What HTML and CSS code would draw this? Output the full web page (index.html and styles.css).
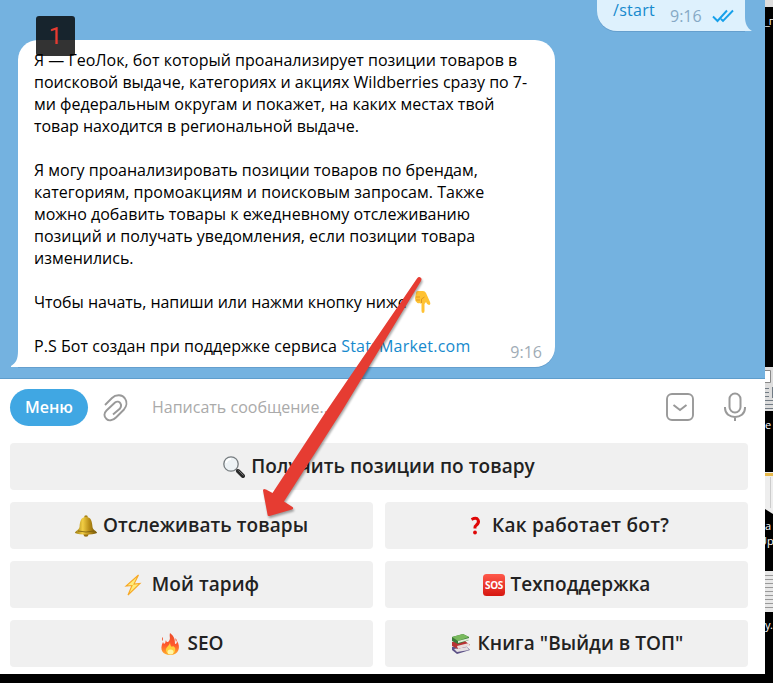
FILE: index.html
```html
<!DOCTYPE html>
<html lang="ru">
<head>
<meta charset="utf-8">
<title>ГеоЛок</title>
<link rel="stylesheet" href="styles.css">
</head>
<body>
<main class="app">
  <section class="chat">
    <div class="outgoing">
      <span class="command">/start</span>
      <time class="sent">9:16</time>
      <svg class="checks" width="22" height="14" viewBox="0 0 22 14"><path d="M1 7.500l4.500 4.500L15 1.500M9 10l2 2L21 1.500" fill="none" stroke="#16a0ea" stroke-width="1.900"/></svg>
      <svg class="tail-out" width="9" height="14" viewBox="0 0 9 14"><path d="M0 0H2C2 6 4 11 9 14H0z" fill="#def1fd"/></svg>
    </div>
    <article class="incoming">
      <p>Я — ГеоЛок, бот который проанализирует позиции товаров в<br>поисковой выдаче, категориях и акциях Wildberries сразу по 7-<br>ми федеральным округам и покажет, на каких местах твой<br><span class="narrow">товар находится в региональной выдаче.</span></p>
      <p>Я могу проанализировать позиции товаров по брендам,<br><span class="wider">категориям, промоакциям и поисковым запросам. Также</span><br>можно добавить товары к ежедневному отслеживанию<br>позиций и получать уведомления, если позиции товара<br>изменились.</p>
      <p><span class="narrow">Чтобы начать, напиши или нажми кнопку ниже</span> <svg class="finger" width="16" height="22" viewBox="0 0 16 22"><path d="M1 2Q1 0 3 0h5q2 0 3 2l4 9q1 2.500-1 3-2 0-3-3l-1.500 2v7q0 2-1.500 2T6.500 20v-8q-1 1-2 0-2 1-3-1Q0 10 0 7z" fill="#ffc233"/><path d="M1 6h4M1 9h4M6.500 12V8l3-2" fill="none" stroke="#dd9822" stroke-width="1"/></svg></p>
      <p><span class="wider">P.S Бот создан при поддержке сервиса</span> <a>StatsMarket.com</a></p>
      <time class="received">9:16</time>
      <svg class="tail-in" width="9" height="16" viewBox="0 0 9 16"><path d="M9 16H0V15C5 12 7 8 7 0H9z" fill="#fff"/></svg>
    </article>
    <div class="step">1</div>
  </section>
  <section class="composer">
    <span class="menu">Меню</span>
    <svg class="clip" width="26" height="28" viewBox="0 0 26 28"><path d="M2 11L9 4C13 0 19.500 .5 22 4.500 24.500 8 23.500 12.500 21 15.500L13 23.500C9.500 27 5.500 27 3.500 25 .5 22.500 1 19 3.500 16.500L12 8.500C14 7 16.500 7.500 17.500 9.500 18.500 11 18 13 17 14.500L10 20.500" fill="none" stroke="#999" stroke-width="1.900"/></svg>
    <span class="placeholder">Написать сообщение...</span>
    <svg class="keyboard-toggle" width="28" height="28" viewBox="0 0 28 28"><rect x="1" y="1" width="26" height="26" rx="5" fill="none" stroke="#999" stroke-width="1.900"/><path d="M7.500 12L14 17l6.500-5" fill="none" stroke="#999" stroke-width="2"/></svg>
    <svg class="mic" width="22" height="30" viewBox="0 0 22 30"><rect x="5.500" y="1.500" width="11" height="19" rx="5.500" fill="none" stroke="#999" stroke-width="2"/><path d="M1 15v1c0 12 20 12 20 0v-1M11 25v4" fill="none" stroke="#999" stroke-width="2"/></svg>
  </section>
  <section class="keys">
    <div class="key wide"><svg width="22" height="22" viewBox="0 0 22 22"><path d="M13 13l2.500 2.500" stroke="#777" stroke-width="2"/><path d="M15 15l5 5" stroke="#292929" stroke-width="4" stroke-linecap="round"/><path d="M15.500 14.500l5 5" stroke="#777" stroke-width="1"/><circle cx="8" cy="8" r="7.200" fill="#edf2f5" stroke="#777d80" stroke-width="1.300"/><path d="M3 7q1-4 5-4" stroke="#fff" fill="none" stroke-width="2"/></svg><span>Получить позиции по товару</span></div>
    <div class="key"><svg width="22" height="22" viewBox="0 0 22 22"><defs><linearGradient id="gold"><stop stop-color="#9c7b12"/><stop offset=".35" stop-color="#f1cd43"/><stop offset=".65" stop-color="#b88d17"/><stop offset="1" stop-color="#725509"/></linearGradient></defs><ellipse cx="11" cy="19.500" rx="2.500" ry="2.300" fill="#987014"/><circle cx="11" cy="2" r="1.800" fill="#a98316"/><path d="M11 2c5 0 6 4 6.500 10 .2 3 4.500 4 4.500 6-5 2-17 2-22 0 0-2 4-3 4.500-6C5 6 6 2 11 2z" fill="url(#gold)"/><path d="M3 16q8 2 16 0" fill="none" stroke="#765b0e" stroke-width=".8"/></svg><span>Отслеживать товары</span></div>
    <div class="key"><svg width="22" height="22" viewBox="0 0 22 22"><path d="M7.500 4.500c7-3.500 9 2.500 4.500 6-1.500 1-1 1.500-1 3" fill="none" stroke="#df0707" stroke-width="3"/><circle cx="11" cy="17.500" r="1.900" fill="#df0707"/></svg><span class="help">Как работает бот?</span></div>
    <div class="key"><svg width="22" height="22" viewBox="0 0 22 22"><path d="M14.500 1L2 12l6-.5L4 21 16 9.500l-6 .5z" fill="#ffec78" stroke="#f7a827" stroke-width="1.100"/></svg><span>Мой тариф</span></div>
    <div class="key"><svg width="22" height="22" viewBox="0 0 22 22"><defs><linearGradient id="red" x2="0" y2="1"><stop stop-color="#ff594b"/><stop offset="1" stop-color="#d61710"/></linearGradient></defs><rect width="22" height="22" rx="3.500" fill="url(#red)"/><text x="11" y="14.500" class="sos">SOS</text></svg><span>Техподдержка</span></div>
    <div class="key"><svg width="22" height="22" viewBox="0 0 22 22"><defs><linearGradient id="flame" x2="0" y2="1"><stop stop-color="#ec4c28"/><stop offset=".55" stop-color="#ff592d"/><stop offset="1" stop-color="#ffb12b"/></linearGradient></defs><path d="M11 0c-1 4 1 5-1 8-1 2-3 1-3-1-1 2 0 3-2 4l-1-2c-4 8 0 13 7 13 9 0 11-8 7-14 0 2-.5 3-2 3 0-5-1-8-5-11z" fill="url(#flame)"/><path d="M3 5l1-1v3L3 8zM16 5l2 2-1 2z" fill="#f26c4b"/><path d="M11 9c0 4-5 5-4 9s8 4 9 0-1-4-2-5c-1 2-3 0-3-4z" fill="#ffd03d"/><ellipse cx="11.500" cy="19" rx="3" ry="2.500" fill="#fff5a6"/></svg><span>SEO</span></div>
    <div class="key"><svg width="22" height="22" viewBox="0 0 22 22"><path d="M2 14l13-2 5 5-13 4-5-4z" fill="#5c5187"/><path d="M4 16l13-2 2 3-12 2z" fill="#e6e1e3"/><path d="M2 9l13-1 5 4-12 4-6-3z" fill="#b83334"/><path d="M7 13l12-3v3L8 16z" fill="#eadddd"/><path d="M2 4l11-3 6 3v3L8 11 2 8z" fill="#397938"/><path d="M2 4l11-3 6 3L8 8z" fill="#79b95d"/><path d="M8 8l11-3v2L8 10z" fill="#dfedd8"/></svg><span>Книга "Выйди в ТОП"</span></div>
  </section>
  <svg class="pointer" width="180" height="250" viewBox="0 0 180 250"><path d="M167 8.500q2-2.500 4-.5 1 1 0 3L92 141 34 231.500l8.500 5.500q1.500 1.500-.5 2.500L19.500 246q-2 .5-2-1.500L13 220.500q0-2.500 3-1L22.500 223 75 143z"/></svg>
</main>
<aside class="desktop">
  <div class="scrap"></div>
  <span class="label a">_п</span>
  <svg class="file" width="8" height="44" viewBox="0 0 8 44"><path fill="#ddd" d="M0 0h8v44H0z"/><path d="M0 3.500h5.500v12H0" fill="#fff" stroke="#888"/><path d="M0 21.500h4M0 25.500h4M0 29.500h4M0 33.500h8M0 37.500h8M0 41.500h8M7.500 20v11" stroke="#717b84"/></svg>
  <span class="label b">е</span>
  <svg class="folder" width="8" height="42" viewBox="0 0 8 42"><path d="M0 0h8v42L0 37z" fill="#eee"/><path d="M0 1h8v3H0z" fill="#e7b94c"/><path d="M5.500 5v31" stroke="#ccc"/></svg>
  <span class="label c">а</span><span class="label d">Up</span>
  <svg class="sheet" width="8" height="41" viewBox="0 0 8 41"><path fill="#e8e8e8" d="M0 0h8v41H0z"/><path d="M0 4.500h8M0 8.500h8M0 12.500h8M0 16.500h8M0 20.500h8M0 24.500h8M0 28.500h8M0 32.500h8M0 36.500h8" stroke="#999"/></svg>
  <span class="label e">у.</span>
</aside>
</body>
</html>
```
FILE: styles.css
```css
* { box-sizing: border-box; }
body {
  margin: 0;
  width: 773px;
  height: 683px;
  display: flex;
  overflow: hidden;
  background: #000;
  font: 16px/22px "Open Sans", sans-serif;
  color: #000;
}
svg { display: block; flex: none; }
.app { position: relative; width: 765px; height: 674px; flex: none; background: #fff; }
.chat {
  position: relative;
  height: 379px;
  padding-left: 18px;
  background: #74b2e0;
  border-bottom: 1px solid #5e9dcc;
}
.outgoing {
  position: relative;
  display: flex;
  width: 148px;
  height: 31px;
  margin-left: 579px;
  padding-left: 16px;
  border-radius: 0 0 0 20px;
  background: #def1fd;
  box-shadow: 0 1px 0 #659fce;
}
.command { width: 57px; margin-top: -1px; color: #168acd; letter-spacing: .3px; }
.sent { margin-top: 5px; width: 42px; color: #86a9c5; }
.checks { margin-top: 9px; }
.tail-out { position: absolute; left: 146px; top: 17px; }
.incoming {
  position: relative;
  width: 537px;
  height: 327px;
  margin-top: 9px;
  padding: 9px 16px;
  border-radius: 20px 20px 20px 0;
  background: #fff;
  box-shadow: 0 1px 0 #659fce;
  white-space: nowrap;
}
.incoming p { margin: 0 0 22px; }
.incoming a { color: #168acd; letter-spacing: .23px; }
.wider { letter-spacing: .04px; }
.narrow { letter-spacing: -.05px; }
.finger { display: inline-block; vertical-align: -5px; margin-left: 4px; }
.received { position: absolute; right: 13px; bottom: 4px; color: #a0acb6; }
.tail-in { position: absolute; left: -7px; bottom: 0; }
.step {
  position: absolute;
  left: 36px;
  top: 16px;
  width: 39px;
  height: 40px;
  border-radius: 3px;
  background: rgba(0, 0, 0, .8);
  color: #e63b31;
  font: 24px/41px Roboto, sans-serif;
  text-align: center;
}
.composer { height: 64px; display: flex; align-items: center; padding: 0 19px 7px 10px; }
.menu {
  width: 78px;
  height: 37px;
  border-radius: 19px;
  background: #40a7e3;
  color: #fff;
  font-weight: 600;
  line-height: 37px;
  text-align: center;
}
.clip { margin-left: 15px; }
.placeholder { margin: -2px 0 0 23px; color: #aaa; }
.keyboard-toggle { margin: -1px 0 0 auto; }
.mic { margin: -1px 0 0 30px; }
.keys { display: grid; grid-template-columns: 363px 363px; grid-auto-rows: 47px; gap: 12px; padding-left: 10px; }
.key {
  display: flex;
  align-items: center;
  justify-content: center;
  gap: 6px;
  border-radius: 4px;
  background: #f0f0f0;
  color: #222;
  font-size: 19px;
  font-weight: 580;
  letter-spacing: .05px;
  white-space: nowrap;
}
.key span { margin-top: -1px; }
.key .help { letter-spacing: .25px; }
.wide { grid-column: span 2; }
.sos { fill: #fff; font: 700 10px "Open Sans", sans-serif; letter-spacing: -.4px; text-anchor: middle; }
.pointer { position: absolute; left: 250px; top: 270px; fill: #e63c32; filter: drop-shadow(1px 2px 1px rgba(0, 0, 0, .35)); }
.desktop { position: relative; width: 8px; overflow: hidden; color: #fff; font-size: 11px; line-height: 14px; }
.desktop > * { position: absolute; left: 0; }
.scrap { width: 8px; height: 7px; background: #ddd; }
.a { top: 14px; letter-spacing: -1px; }
.file { top: 367px; }
.b { top: 418px; }
.folder { top: 472px; }
.c { top: 519px; }
.d { top: 534px; }
.desktop .d { left: -6px; }
.sheet { top: 571px; }
.e { top: 618px; letter-spacing: -.5px; }
```
